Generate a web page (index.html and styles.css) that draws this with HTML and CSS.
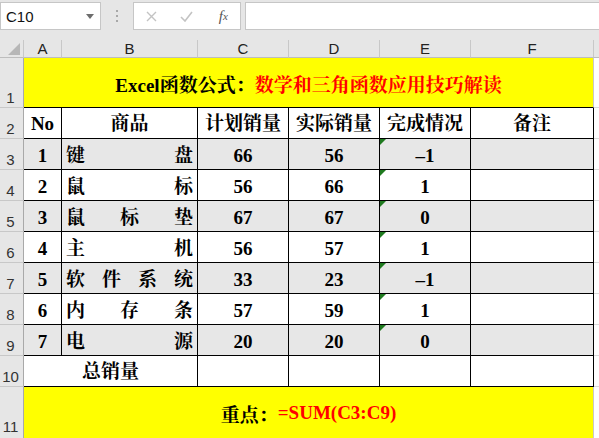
FILE: index.html
```html
<!DOCTYPE html>
<html lang="zh">
<head>
<meta charset="utf-8">
<link rel="stylesheet" href="styles.css">
</head>
<body>
<div class="app">
  <div class="fbar">
    <div class="namebox"><span>C10</span><svg class="dd" width="8" height="5" viewBox="0 0 8 5"><path d="M0 0h8L4 5z" fill="#6d6d6d"/></svg></div>
    <div class="grip"><svg width="3" height="12" viewBox="0 0 3 12"><rect x="0" y="0" width="2" height="2" fill="#a8a8a8"/><rect x="0" y="5" width="2" height="2" fill="#a8a8a8"/><rect x="0" y="10" width="2" height="2" fill="#a8a8a8"/></svg></div>
    <div class="fbtns">
      <span class="fbtn"><svg width="11" height="11" viewBox="0 0 11 11"><path d="M1 1l9 9M10 1l-9 9" stroke="#c3c3c3" stroke-width="1.4" fill="none"/></svg></span>
      <span class="fbtn"><svg width="13" height="11" viewBox="0 0 13 11"><path d="M1 6l4 4 7-9" stroke="#c3c3c3" stroke-width="1.6" fill="none"/></svg></span>
      <span class="fbtn fx">f<sub>x</sub></span>
    </div>
    <div class="finput"></div>
  </div>
  <div class="sheet">
    <div class="corner"><svg width="24" height="18" viewBox="0 0 24 18"><path d="M20 3v12H8z" fill="#b7b7b7"/></svg></div>
    <div class="ch">A</div><div class="ch">B</div><div class="ch">C</div><div class="ch">D</div><div class="ch">E</div><div class="ch">F</div><div class="ch chg"></div>

    <div class="rh">1</div>
    <div class="title span6"><span>Excel函数公式：</span><span class="red">数学和三角函数应用技巧解读</span></div>
    <div class="g"></div>

    <div class="rh">2</div>
    <div class="c">No</div><div class="c">商品</div><div class="c">计划销量</div><div class="c">实际销量</div><div class="c">完成情况</div><div class="c">备注</div><div class="g"></div>

    <div class="rh">3</div>
    <div class="c d s">1</div><div class="c d s dist"><span>键</span><span>盘</span></div><div class="c d s">66</div><div class="c d s">56</div><div class="c d s tri">–1</div><div class="c d s"></div><div class="g"></div>

    <div class="rh">4</div>
    <div class="c d">2</div><div class="c d dist"><span>鼠</span><span>标</span></div><div class="c d">56</div><div class="c d">66</div><div class="c d tri">1</div><div class="c d"></div><div class="g"></div>

    <div class="rh">5</div>
    <div class="c d s">3</div><div class="c d s dist"><span>鼠</span><span>标</span><span>垫</span></div><div class="c d s">67</div><div class="c d s">67</div><div class="c d s tri">0</div><div class="c d s"></div><div class="g"></div>

    <div class="rh">6</div>
    <div class="c d">4</div><div class="c d dist"><span>主</span><span>机</span></div><div class="c d">56</div><div class="c d">57</div><div class="c d tri">1</div><div class="c d"></div><div class="g"></div>

    <div class="rh">7</div>
    <div class="c d s">5</div><div class="c d s dist"><span>软</span><span>件</span><span>系</span><span>统</span></div><div class="c d s">33</div><div class="c d s">23</div><div class="c d s tri">–1</div><div class="c d s"></div><div class="g"></div>

    <div class="rh">8</div>
    <div class="c d">6</div><div class="c d dist"><span>内</span><span>存</span><span>条</span></div><div class="c d">57</div><div class="c d">59</div><div class="c d tri">1</div><div class="c d"></div><div class="g"></div>

    <div class="rh">9</div>
    <div class="c d s">7</div><div class="c d s dist"><span>电</span><span>源</span></div><div class="c d s">20</div><div class="c d s">20</div><div class="c d s tri">0</div><div class="c d s"></div><div class="g"></div>

    <div class="rh">10</div>
    <div class="c span2">总销量</div><div class="c"></div><div class="c"></div><div class="c"></div><div class="c"></div><div class="g"></div>

    <div class="rh last">11</div>
    <div class="title span6 last"><span>重点：</span><span class="red">=SUM(C3:C9)</span></div>
    <div class="g last"></div>
  </div>
</div>
</body>
</html>
```
FILE: styles.css
```css
* { box-sizing: border-box; }
html, body { margin: 0; padding: 0; }
body { width: 599px; height: 438px; overflow: hidden; background: #e6e6e6; }
.app { width: 599px; }

.fbar {
  height: 40px;
  display: flex;
  align-items: flex-start;
  padding-top: 2px;
  background: #e6e6e6;
}
.namebox {
  width: 101px; height: 28px;
  background: #fff;
  border: 1px solid #c6c6c6;
  display: flex; align-items: center; justify-content: space-between;
  padding: 0 6px 0 5px;
  font: 15px "Liberation Sans", Arial, sans-serif;
  color: #111;
}
.grip { width: 32px; height: 28px; display: flex; align-items: center; justify-content: center; }
.fbtns {
  width: 108px; height: 28px;
  background: #fff;
  border: 1px solid #c6c6c6;
  display: flex;
}
.fbtn { width: 36px; height: 26px; display: flex; align-items: center; justify-content: center; }
.fx {
  font: italic 15px "Liberation Serif", serif;
  color: #555;
  padding-left: 2px;
}
.fx sub { font-size: 11px; vertical-align: -1px; }
.finput {
  flex: 1; height: 28px; margin-left: 4px;
  background: #fff;
  border: 1px solid #c6c6c6;
  border-right: none;
}

.sheet {
  display: grid;
  grid-template-columns: 24px 38px 136px 91px 91px 91px 123px 5px;
  grid-template-rows: 18px 50px repeat(9, 31px) 52px;
  background: #fff;
  font: bold 19px "Liberation Serif", "Noto Serif CJK SC", "Noto Sans CJK SC", serif;
  color: #000;
}
.corner { background: #e6e6e6; border-right: 1px solid #c8c8c8; border-bottom: 1px solid #bdbdbd; }
.corner svg { display: block; }
.ch {
  background: #e6e6e6;
  border-right: 1px solid #c8c8c8;
  border-bottom: 1px solid #bdbdbd;
  display: flex; align-items: flex-end; justify-content: center;
  font: 15px "Liberation Sans", Arial, sans-serif;
  color: #222;
  line-height: 17px;
}
.chg { border-right: none; }
.rh {
  background: #e6e6e6;
  border-right: 1px solid #a9a9a9;
  border-bottom: 1px solid #c8c8c8;
  display: flex; align-items: flex-end; justify-content: center;
  font: 15px "Liberation Sans", Arial, sans-serif;
  color: #333;
  padding: 0 2px 0 0;
  line-height: 18px;
}
.rh.last { padding-bottom: 2px; }
.title {
  background: #ffff00;
  border-right: 1px solid #c8c8c8;
  border-bottom: 1px solid #000;
  display: flex; align-items: center; justify-content: center;
  padding-top: 1px;
}
.title.last { border-bottom: none; padding-bottom: 1px; }
.g.last { border-bottom: none; }
.span6 { grid-column: span 6; }
.span2 { grid-column: span 2; }
.red { color: #ff0000; }
.g { background: #fff; border-bottom: 1px solid #d9d9d9; }

.c {
  position: relative;
  border-right: 1px solid #000;
  border-bottom: 1px solid #000;
  display: flex; align-items: center; justify-content: center;
  background: #fff;
  line-height: 1;
}
.d { padding-top: 3px; }
.s { background: #e7e7e7; }
.dist { justify-content: space-between; padding-left: 4px; padding-right: 4px; }
.tri::before {
  content: "";
  position: absolute; left: 0; top: 0;
  width: 0; height: 0;
  border-top: 6px solid #1f7a1f;
  border-right: 6px solid transparent;
}
```
